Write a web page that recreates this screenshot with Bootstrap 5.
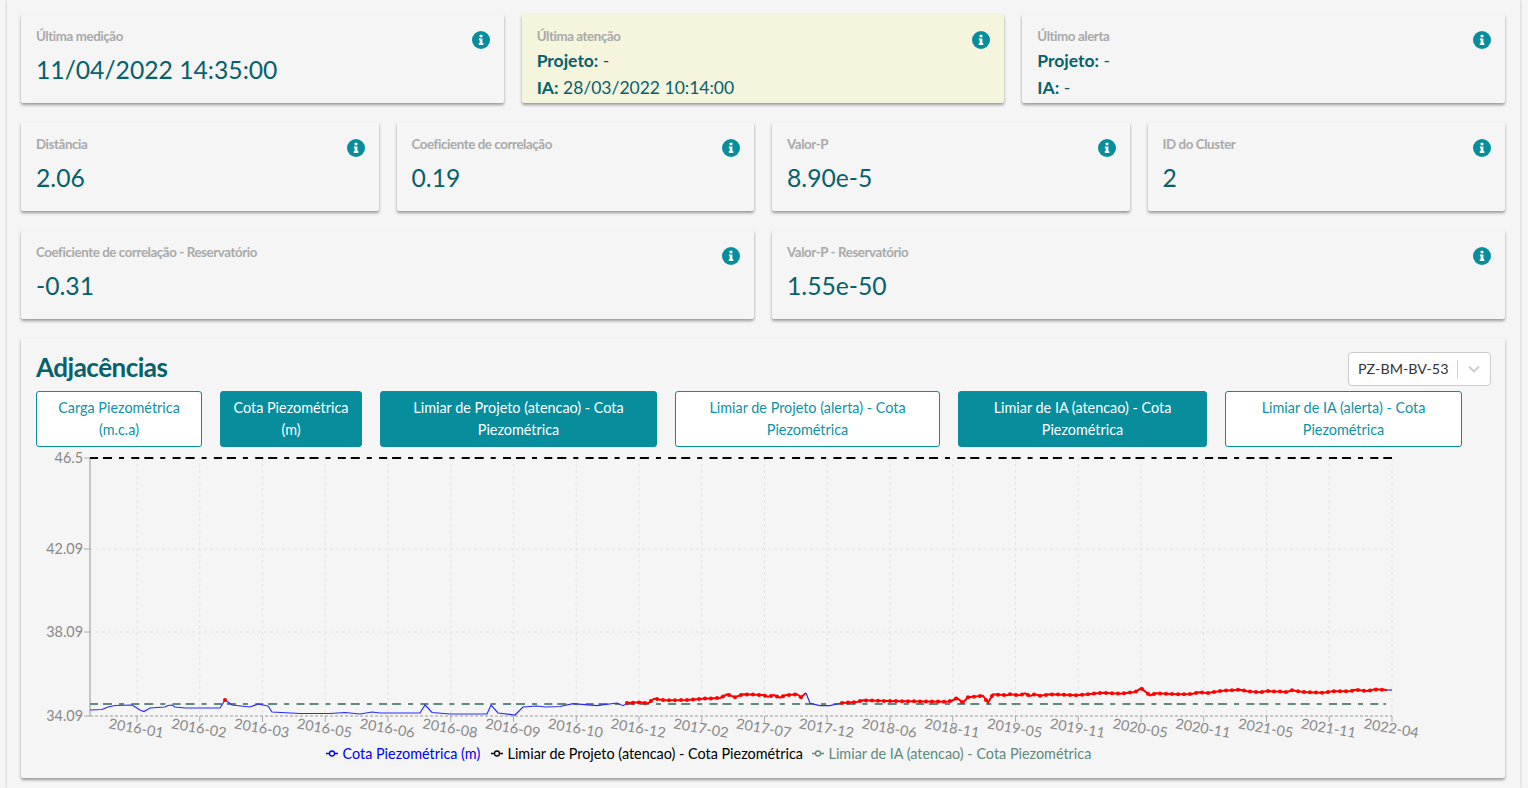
<!DOCTYPE html>
<html lang="pt-BR">
<head>
  <meta charset="UTF-8">
  <meta name="viewport" content="width=device-width, initial-scale=1.0">
  <title>Adjacências</title>
  <link href="https://cdn.jsdelivr.net/npm/bootstrap@5.3.1/dist/css/bootstrap.min.css" rel="stylesheet">
  <style>
    body {
      background-color: #f5f5f5;
      font-family: "Lato", "Liberation Sans", sans-serif;
      overflow: hidden;
    }
    .page-frame {
      margin: 0 8px 0 7px;
      padding: 14px 15px 0 14px;
      box-shadow: 0 0 3px rgba(0, 0, 0, .22);
      height: 788px;
    }
    .tile-row {
      --bs-gutter-x: 18px;
      margin-bottom: 19px;
    }
    .tile {
      background: #f5f5f5;
      box-shadow: 0 2px 3px rgba(0, 0, 0, .38);
      border: 0;
      border-radius: 2px;
      padding: 13px 14px 0 15px;
      height: 89px;
      overflow: hidden;
    }
    .tile-warn { background: #f5f4dd; }
    .tile-label {
      font-size: 13.3px;
      line-height: 18px;
      font-weight: 700;
      color: #a9a9a9;
      letter-spacing: -.4px;
    }
    .tile-value {
      font-size: 24.7px;
      line-height: 32px;
      margin-top: 9px;
      color: #05616b;
    }
    .tile-line {
      font-size: 17.5px;
      line-height: 27px;
      color: #05616b;
    }
    .tile-label + .tile-line { margin-top: 2px; }
    .info-icon {
      width: 18px;
      height: 18px;
      flex: none;
      margin-top: 4px;
    }
    .chart-panel {
      background: #f5f5f5;
      box-shadow: 0 2px 3px rgba(0, 0, 0, .38);
      border: 0;
      border-radius: 2px;
      height: 440px;
      padding: 14px 14px 0 15px;
    }
    .panel-title {
      font-size: 26px;
      line-height: 30px;
      font-weight: 700;
      letter-spacing: -.5px;
      color: #05616b;
      margin: 0;
    }
    .fake-select {
      width: 143px;
      height: 34px;
      background: #fff;
      border: 1px solid #ccc;
      border-radius: 4px;
      font-size: 14.3px;
      color: #333;
      padding-left: 9px;
    }
    .fake-select .sep {
      width: 1px;
      height: 18px;
      background: #ccc;
      margin-left: 9px;
    }
    .fake-select svg { margin-left: 9px; }
    .serie-bar { gap: 18px; margin-top: 5px; }
    .serie-btn {
      --bs-btn-color: #0d93a6;
      --bs-btn-border-color: #078d9c;
      --bs-btn-bg: #fff;
      --bs-btn-hover-color: #0d93a6;
      --bs-btn-hover-bg: #fff;
      --bs-btn-hover-border-color: #078d9c;
      font-size: 14.4px;
      line-height: 22px;
      height: 56px;
      padding: 5px 8px;
      border-radius: 3px;
    }
    .serie-btn.on {
      --bs-btn-color: #fff;
      --bs-btn-bg: #078d9c;
      --bs-btn-hover-color: #fff;
      --bs-btn-hover-bg: #078d9c;
    }
    .w-a { width: 166px; }
    .w-b { width: 142px; }
    .w-c { width: 277px; }
    .w-d { width: 265px; }
    .w-e { width: 249px; }
    .w-f { width: 237px; }
    .chart-box { margin-left: -36px; }
    .chart-box svg { display: block; }
    .chart-box text { font-family: "Lato", "Liberation Sans", sans-serif; }
  </style>
</head>
<body>
  <svg width="0" height="0" class="position-absolute">
    <symbol id="info" viewBox="0 0 18 18">
      <circle cx="9" cy="9" r="9" fill="#078d9c"/>
      <rect x="7.6" y="3.7" width="2.8" height="2.6" rx=".5" fill="#fff"/>
      <path d="M6.9 7.4h3.5v4.7h.9v1.8H6.8v-1.8h.9V9.2h-.8z" fill="#fff"/>
    </symbol>
  </svg>

  <div class="page-frame">
    <div class="row tile-row">
      <div class="col-4">
        <div class="card tile">
          <div class="d-flex justify-content-between">
            <div>
              <div class="tile-label">Última medição</div>
              <div class="tile-value">11/04/2022 14:35:00</div>
            </div>
            <svg class="info-icon"><use href="#info"/></svg>
          </div>
        </div>
      </div>
      <div class="col-4">
        <div class="card tile tile-warn">
          <div class="d-flex justify-content-between">
            <div>
              <div class="tile-label">Última atenção</div>
              <div class="tile-line"><b>Projeto:</b> -</div>
              <div class="tile-line"><b>IA:</b> 28/03/2022 10:14:00</div>
            </div>
            <svg class="info-icon"><use href="#info"/></svg>
          </div>
        </div>
      </div>
      <div class="col-4">
        <div class="card tile">
          <div class="d-flex justify-content-between">
            <div>
              <div class="tile-label">Último alerta</div>
              <div class="tile-line"><b>Projeto:</b> -</div>
              <div class="tile-line"><b>IA:</b> -</div>
            </div>
            <svg class="info-icon"><use href="#info"/></svg>
          </div>
        </div>
      </div>
    </div>

    <div class="row tile-row">
      <div class="col-3">
        <div class="card tile">
          <div class="d-flex justify-content-between">
            <div><div class="tile-label">Distância</div><div class="tile-value">2.06</div></div>
            <svg class="info-icon"><use href="#info"/></svg>
          </div>
        </div>
      </div>
      <div class="col-3">
        <div class="card tile">
          <div class="d-flex justify-content-between">
            <div><div class="tile-label">Coeficiente de correlação</div><div class="tile-value">0.19</div></div>
            <svg class="info-icon"><use href="#info"/></svg>
          </div>
        </div>
      </div>
      <div class="col-3">
        <div class="card tile">
          <div class="d-flex justify-content-between">
            <div><div class="tile-label">Valor-P</div><div class="tile-value">8.90e-5</div></div>
            <svg class="info-icon"><use href="#info"/></svg>
          </div>
        </div>
      </div>
      <div class="col-3">
        <div class="card tile">
          <div class="d-flex justify-content-between">
            <div><div class="tile-label">ID do Cluster</div><div class="tile-value">2</div></div>
            <svg class="info-icon"><use href="#info"/></svg>
          </div>
        </div>
      </div>
    </div>

    <div class="row tile-row">
      <div class="col-6">
        <div class="card tile">
          <div class="d-flex justify-content-between">
            <div><div class="tile-label">Coeficiente de correlação - Reservatório</div><div class="tile-value">-0.31</div></div>
            <svg class="info-icon"><use href="#info"/></svg>
          </div>
        </div>
      </div>
      <div class="col-6">
        <div class="card tile">
          <div class="d-flex justify-content-between">
            <div><div class="tile-label">Valor-P - Reservatório</div><div class="tile-value">1.55e-50</div></div>
            <svg class="info-icon"><use href="#info"/></svg>
          </div>
        </div>
      </div>
    </div>

    <div class="card chart-panel">
      <div class="d-flex justify-content-between align-items-start">
        <h2 class="panel-title">Adjacências</h2>
        <div class="fake-select d-flex align-items-center">
          <span>PZ-BM-BV-53</span>
          <span class="sep"></span>
          <svg width="14" height="14" viewBox="0 0 14 14"><path d="M2 4.5l5 5 5-5" fill="none" stroke="#ccc" stroke-width="1.8"/></svg>
        </div>
      </div>
      <div class="d-flex serie-bar">
        <button class="btn serie-btn w-a">Carga Piezométrica (m.c.a)</button>
        <button class="btn serie-btn on w-b">Cota Piezométrica (m)</button>
        <button class="btn serie-btn on w-c">Limiar de Projeto (atencao) - Cota Piezométrica</button>
        <button class="btn serie-btn w-d">Limiar de Projeto (alerta) - Cota Piezométrica</button>
        <button class="btn serie-btn on w-e">Limiar de IA (atencao) - Cota Piezométrica</button>
        <button class="btn serie-btn w-f">Limiar de IA (alerta) - Cota Piezométrica</button>
      </div>
      <div class="chart-box" id="chart"></div>
    </div>
  </div>

  <script>
    // coordenadas em pixels da pagina, o svg comeca em y=447
    const oy = 447;
    const left = 90, right = 1392, top_ = 458, bottom = 716;
    const ticks = ['2016-01','2016-02','2016-03','2016-05','2016-06','2016-08','2016-09','2016-10','2016-12','2017-02','2017-07','2017-12','2018-06','2018-11','2019-05','2019-11','2020-05','2020-11','2021-05','2021-11','2022-04'];
    const yLabels = [['46.5', 458], ['42.09', 549], ['38.09', 632], ['34.09', 716]];

    const azul1 = [[90,710],[102,709.5],[108,707],[115,705.5],[132,705],[140,710],[144,711.5],[150,708],[165,707],[168,705.5],[172,705],[175,707],[185,708],[220,708],[225,700],[228,702],[232,705],[250,707],[258,704],[268,706],[272,712],[300,713.5],[330,713.5],[345,712.5],[360,714],[372,712],[380,713],[420,713],[425,705],[428,708],[432,712.5],[450,714],[487,714],[491,705],[498,713],[515,715],[523,707],[537,706],[545,707],[560,706.5],[573,703.7],[597,705.7],[617,703],[623,705.7],[628,703]];
    const azul2 = [[806,693],[810,703.3],[820,705.7],[830,705.7],[837,704],[842,703]];
    const azul3 = [[1387,690],[1392,690]];
    const verm1 = [[627,703],[640,702.3],[648,703.3],[654,698.7],[665,700.3],[687,700],[703,698.7],[720,698],[727,694.3],[735,697.3],[743,694.3],[763,695],[768,696.7],[774,695],[780,697.7],[785,695.3],[797,694.3],[801,697.3],[806,693]];
    const verm2 = [[842,703],[857,702],[863,700.3],[887,701],[947,701.7],[952,700.7],[957,698],[963,702.7],[968,697.3],[983,695.7],[988,702.7],[993,694.3],[1007,695.3],[1010,694.3],[1020,695.3],[1025,693.3],[1030,696],[1035,694.3],[1040,695.7],[1050,694.3],[1077,695.3],[1090,694],[1103,692.7],[1120,693.7],[1135,692],[1141,688.3],[1150,695.3],[1156,693.3],[1177,694.3],[1192,694],[1198,692.3],[1207,693],[1223,690.7],[1240,689.7],[1247,691.3],[1260,692.3],[1267,691],[1287,692],[1292,690.3],[1303,692],[1323,692.7],[1333,691.3],[1350,691.3],[1355,689.7],[1367,691],[1375,689.3],[1387,690]];

    function pts(arr) {
      return arr.map(p => p[0] + ',' + (p[1] - oy)).join(' ');
    }

    function bolinhas(arr) {
      let out = '';
      for (let x = arr[0][0]; x <= arr[arr.length - 1][0]; x += 6) {
        let i = 0;
        while (i < arr.length - 2 && arr[i + 1][0] < x) i++;
        const t = (x - arr[i][0]) / (arr[i + 1][0] - arr[i][0]);
        const y = arr[i][1] + t * (arr[i + 1][1] - arr[i][1]);
        out += `<circle cx="${x}" cy="${(y - oy).toFixed(1)}" r="2" fill="#f00"/>`;
      }
      return out;
    }

    let svg = `<svg width="1484" height="331" viewBox="0 0 1484 331">`;
    // grade
    yLabels.slice(1, 3).forEach(l => {
      svg += `<line x1="${left}" x2="${right}" y1="${l[1] - oy}" y2="${l[1] - oy}" stroke="#e2e2e2" stroke-dasharray="3 3"/>`;
    });
    ticks.forEach((t, k) => {
      const x = 137 + 62.75 * k;
      svg += `<line x1="${x}" x2="${x}" y1="${top_ - oy}" y2="${bottom - oy}" stroke="#e2e2e2" stroke-dasharray="3 3"/>`;
      svg += `<line x1="${x}" x2="${x}" y1="${bottom - oy}" y2="${bottom - oy + 6}" stroke="#aaa"/>`;
      svg += `<text transform="translate(${x - 1} ${bottom - oy + 13.5}) rotate(10)" text-anchor="middle" dominant-baseline="middle" font-size="14.4" fill="#888">${t}</text>`;
    });
    // eixos
    svg += `<line x1="${left}" x2="${left}" y1="${top_ - oy}" y2="${bottom - oy}" stroke="#b5b5b5" stroke-width="1.5"/>`;
    svg += `<line x1="${left}" x2="${right}" y1="${bottom - oy}" y2="${bottom - oy}" stroke="#999" stroke-dasharray="3 2"/>`;
    yLabels.forEach(l => {
      svg += `<line x1="${left - 6}" x2="${left}" y1="${l[1] - oy}" y2="${l[1] - oy}" stroke="#aaa"/>`;
      svg += `<text x="${left - 7}" y="${l[1] - oy + 1.5}" text-anchor="end" dominant-baseline="middle" font-size="14.4" fill="#888">${l[0]}</text>`;
    });
    // limiares
    svg += `<line x1="${left}" x2="${right}" y1="${top_ - oy}" y2="${top_ - oy}" stroke="#000" stroke-width="2" stroke-dasharray="8 5 9 7 5 7.3"/>`;
    svg += `<line x1="${left}" x2="1386" y1="${704 - oy}" y2="${704 - oy}" stroke="#5f8a7c" stroke-width="2" stroke-dasharray="8 5 9 7 5 7.3"/>`;
    // series
    [azul1, azul2, azul3].forEach(a => {
      svg += `<polyline points="${pts(a)}" fill="none" stroke="#2a2aff" stroke-width="1.2"/>`;
    });
    svg += `<polyline points="${pts(verm1)}" fill="none" stroke="#f00" stroke-width="2"/>` + bolinhas(verm1);
    svg += `<polyline points="${pts(verm2)}" fill="none" stroke="#f00" stroke-width="2"/>` + bolinhas(verm2);
    svg += `<circle cx="225" cy="${700 - oy}" r="2" fill="#f00"/>`;
    // legenda
    const legenda = [[326, 'Cota Piezométrica (m)', '#0000ff'], [491, 'Limiar de Projeto (atencao) - Cota Piezométrica', '#000'], [812, 'Limiar de IA (atencao) - Cota Piezométrica', '#5f8a7c']];
    legenda.forEach(l => {
      const y = 753.5 - oy;
      svg += `<line x1="${l[0]}" x2="${l[0] + 12}" y1="${y}" y2="${y}" stroke="${l[2]}" stroke-width="1.5"/>`;
      svg += `<circle cx="${l[0] + 6}" cy="${y}" r="2.5" fill="#f5f5f5" stroke="${l[2]}" stroke-width="1.3"/>`;
      svg += `<text x="${l[0] + 16.5}" y="${y + 1.5}" dominant-baseline="middle" font-size="14.4" fill="${l[2]}">${l[1]}</text>`;
    });
    svg += '</svg>';
    document.getElementById('chart').innerHTML = svg;
  </script>
  <script src="https://cdn.jsdelivr.net/npm/bootstrap@5.3.1/dist/js/bootstrap.bundle.min.js"></script>
</body>
</html>
